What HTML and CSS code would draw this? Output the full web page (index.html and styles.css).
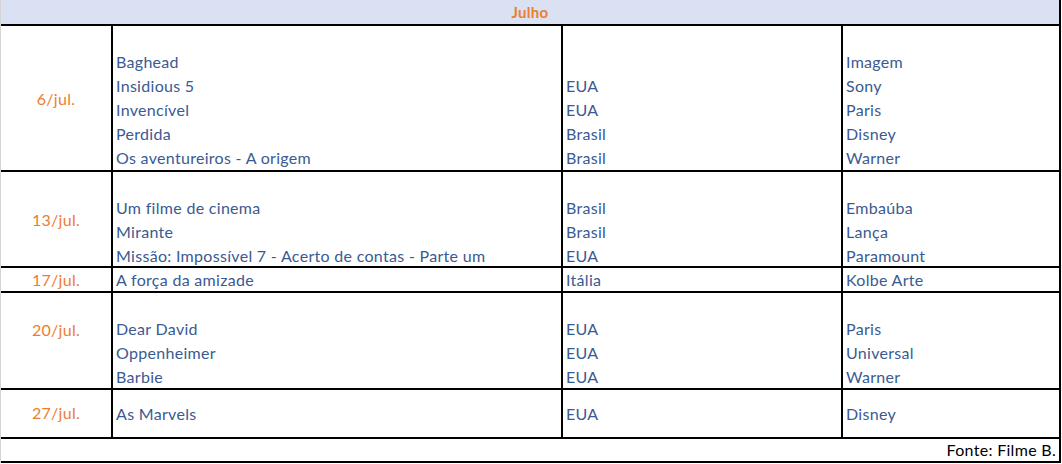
FILE: index.html
```html
<!DOCTYPE html>
<html lang="pt">
<head>
<meta charset="utf-8">
<title>Julho</title>
<link rel="stylesheet" href="styles.css">
</head>
<body>
<div class="sheet">
  <div class="header">Julho</div>

  <div class="row row-1">
    <div class="date date-1">6/jul.</div>
    <div class="cell">
      <div class="line"></div>
      <div class="line">Baghead</div>
      <div class="line">Insidious 5</div>
      <div class="line">Invencível</div>
      <div class="line">Perdida</div>
      <div class="line">Os aventureiros - A origem</div>
    </div>
    <div class="cell">
      <div class="line"></div>
      <div class="line"></div>
      <div class="line">EUA</div>
      <div class="line">EUA</div>
      <div class="line">Brasil</div>
      <div class="line">Brasil</div>
    </div>
    <div class="cell">
      <div class="line"></div>
      <div class="line">Imagem</div>
      <div class="line">Sony</div>
      <div class="line">Paris</div>
      <div class="line">Disney</div>
      <div class="line">Warner</div>
    </div>
  </div>

  <div class="row row-2">
    <div class="date">13/jul.</div>
    <div class="cell">
      <div class="line"></div>
      <div class="line">Um filme de cinema</div>
      <div class="line">Mirante</div>
      <div class="line">Missão: Impossível 7 - Acerto de contas - Parte um</div>
    </div>
    <div class="cell">
      <div class="line"></div>
      <div class="line">Brasil</div>
      <div class="line">Brasil</div>
      <div class="line">EUA</div>
    </div>
    <div class="cell">
      <div class="line"></div>
      <div class="line">Embaúba</div>
      <div class="line">Lança</div>
      <div class="line">Paramount</div>
    </div>
  </div>

  <div class="row row-3">
    <div class="date">17/jul.</div>
    <div class="cell"><div class="line">A força da amizade</div></div>
    <div class="cell"><div class="line">Itália</div></div>
    <div class="cell"><div class="line">Kolbe Arte</div></div>
  </div>

  <div class="row row-4">
    <div class="date date-4">20/jul.</div>
    <div class="cell">
      <div class="line"></div>
      <div class="line">Dear David</div>
      <div class="line">Oppenheimer</div>
      <div class="line">Barbie</div>
    </div>
    <div class="cell">
      <div class="line"></div>
      <div class="line">EUA</div>
      <div class="line">EUA</div>
      <div class="line">EUA</div>
    </div>
    <div class="cell">
      <div class="line"></div>
      <div class="line">Paris</div>
      <div class="line">Universal</div>
      <div class="line">Warner</div>
    </div>
  </div>

  <div class="row row-5">
    <div class="date">27/jul.</div>
    <div class="cell"><div class="line">As Marvels</div></div>
    <div class="cell"><div class="line">EUA</div></div>
    <div class="cell"><div class="line">Disney</div></div>
  </div>

  <div class="footer">Fonte: Filme B.</div>
</div>
</body>
</html>
```

FILE: styles.css
```css
html, body {
  margin: 0;
  padding: 0;
  background: #ffffff;
}

body {
  font-family: Lato, "Open Sans", "Liberation Sans", sans-serif;
  font-size: 16px;
  letter-spacing: 0.3px;
  color: #3a5a92;
}

.sheet {
  width: 1061px;
  box-sizing: border-box;
  border-left: 1px solid #d4d4d4;
  border-right: 2px solid #000000;
}

.header {
  height: 24px;
  line-height: 24px;
  background: #d9e1f2;
  border-bottom: 2px solid #000000;
  text-align: center;
  font-size: 15px;
  font-weight: 700;
  color: #ed7d31;
}

.row {
  display: grid;
  grid-template-columns: 110px 450px 280px 218px;
  border-bottom: 2px solid #000000;
}

.row-1 { height: 144px; }
.row-2 { height: 94px; }
.row-3 { height: 23px; }
.row-4 { height: 95px; }
.row-5 { height: 47px; }

.date {
  display: flex;
  align-items: center;
  justify-content: center;
  color: #ed7d31;
  padding-bottom: 2px;
}

.date-1 { padding-top: 0; padding-bottom: 0; }
.date-4 { padding-bottom: 24px; }

.cell {
  border-left: 2px solid #000000;
  padding-left: 3px;
  display: flex;
  flex-direction: column;
  justify-content: center;
  white-space: nowrap;
}

.line {
  height: 24px;
  line-height: 23px;
  flex: none;
}

.footer {
  height: 22px;
  line-height: 22px;
  border-bottom: 2px solid #000000;
  text-align: right;
  padding-right: 3px;
  color: #000000;
}
```
